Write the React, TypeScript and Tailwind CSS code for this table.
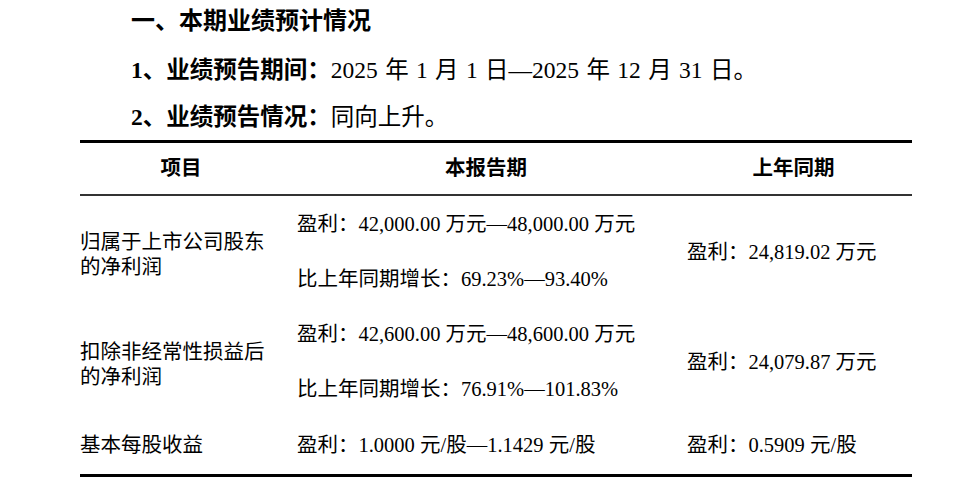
const rows = [
  {
    item: ["归属于上市公司股东", "的净利润"],
    current: ["盈利：42,000.00 万元—48,000.00 万元", "比上年同期增长：69.23%—93.40%"],
    last: "盈利：24,819.02 万元",
  },
  {
    item: ["扣除非经常性损益后", "的净利润"],
    current: ["盈利：42,600.00 万元—48,600.00 万元", "比上年同期增长：76.91%—101.83%"],
    last: "盈利：24,079.87 万元",
  },
];

export default function App() {
  return (
    <div className="w-[960px] h-[490px] bg-white text-black overflow-hidden font-['Liberation_Serif','Noto_Sans_CJK_SC',serif]">
      <div className="pl-[131px] pt-[5px]">
        <h2 className="text-[24px] leading-[32px] font-bold">一、本期业绩预计情况</h2>
        <p className="mt-[10px] text-[23.5px] leading-[47px]">
          <span className="font-bold">1</span>
          <span className="font-semibold">、业绩预告期间：</span>
          <span className="[word-spacing:1.5px]">2025 年 1 月 1 日—2025 年 12 月 31 日。</span>
        </p>
        <p className="text-[23.5px] leading-[46px]">
          <span className="font-bold">2</span>
          <span className="font-semibold">、业绩预告情况：</span>同向上升。
        </p>
      </div>

      <div className="ml-[80px] w-[832px] border-t-[3px] border-b-[3px] border-black text-[20.5px]">
        {/* header */}
        <div className="grid grid-cols-[202px_393px_237px] h-[53px] items-center border-b-2 border-[#333] font-semibold">
          <div className="text-center">项目</div>
          <div className="text-center pl-[15px]">本报告期</div>
          <div className="text-center">上年同期</div>
        </div>

        {rows.map((r) => (
          <div key={r.item[0]} className="grid grid-cols-[202px_393px_237px] h-[110px]">
            <div className="flex flex-col justify-center pt-[6px] leading-[25px]">
              {r.item.map((t) => (
                <div key={t}>{t}</div>
              ))}
            </div>
            <div className="pl-[15px] pt-[1px] leading-[55px]">
              {r.current.map((t) => (
                <div key={t}>{t}</div>
              ))}
            </div>
            <div className="flex items-center pl-[12px] pt-[2px]">{r.last}</div>
          </div>
        ))}

        <div className="grid grid-cols-[202px_393px_237px] h-[58px] items-center">
          <div>基本每股收益</div>
          <div className="pl-[15px]">盈利：1.0000 元/股—1.1429 元/股</div>
          <div className="pl-[12px]">盈利：0.5909 元/股</div>
        </div>
      </div>
    </div>
  );
}
